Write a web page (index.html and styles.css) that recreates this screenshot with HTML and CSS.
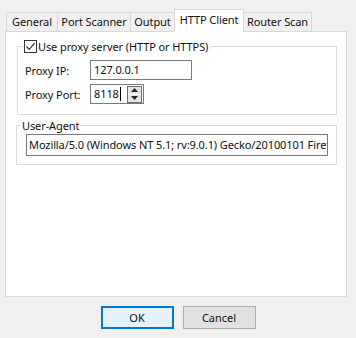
FILE: index.html
```html
<!DOCTYPE html>
<html lang="en">
<head>
    <meta charset="UTF-8">
    <title>Settings</title>
    <link rel="stylesheet" href="styles.css">
</head>
<body>
    <div class="dialog">
        <!-- Tab strip -->
        <div class="tabs">
            <div class="tab tab-general">General</div>
            <div class="tab tab-scanner">Port Scanner</div>
            <div class="tab tab-output">Output</div>
            <div class="tab tab-http active">HTTP Client</div>
            <div class="tab tab-router">Router Scan</div>
        </div>

        <div class="panel">
            <!-- Proxy settings -->
            <fieldset class="group proxy-group">
                <legend class="check-legend">
                    <span class="checkbox">
                        <svg width="11" height="11" viewBox="0 0 11 11"><polyline points="1.5,5.5 4.2,8.3 9.6,2.2" fill="none" stroke="#333" stroke-width="1.2"/></svg>
                    </span>
                    <span>Use proxy server (HTTP or HTTPS)</span>
                </legend>
                <div class="row">
                    <span class="label">Proxy IP:</span>
                    <div class="field ip-field">127.0.0.1</div>
                </div>
                <div class="row">
                    <span class="label">Proxy Port:</span>
                    <div class="field port-field">
                        <span>8118</span><span class="caret"></span>
                        <span class="spin">
                            <span class="spin-btn"><svg width="7" height="4" viewBox="0 0 7 4"><polygon points="0,4 3.5,0 7,4" fill="#222"/></svg></span>
                            <span class="spin-btn"><svg width="7" height="4" viewBox="0 0 7 4"><polygon points="0,0 7,0 3.5,4" fill="#222"/></svg></span>
                        </span>
                    </div>
                </div>
            </fieldset>

            <!-- User agent -->
            <fieldset class="group ua-group">
                <legend class="text-legend">User-Agent</legend>
                <div class="field ua-field">Mozilla/5.0 (Windows NT 5.1; rv:9.0.1) Gecko/20100101 Firefox/9.0.1</div>
            </fieldset>
        </div>

        <div class="buttons">
            <button class="btn btn-default">OK</button>
            <button class="btn">Cancel</button>
        </div>
    </div>
</body>
</html>
```

FILE: styles.css
```css
/* Base */
* {
    box-sizing: border-box;
}

body {
    margin: 0;
    background: #f0f0f0;
    font-family: 'Noto Sans', 'Segoe UI', sans-serif;
    font-size: 11px;
    letter-spacing: -0.1px;
    color: #111;
}

.dialog {
    width: 356px;
    height: 338px;
    padding: 9px 9px 0 5px;
}

/* Tabs */
.tabs {
    display: flex;
    align-items: flex-end;
    height: 22px;
    padding-left: 1px;
}

.tab {
    height: 19px;
    margin-right: -1px;
    border: 1px solid #d9d9d9;
    border-bottom: none;
    background: #f0f0f0;
    line-height: 17px;
    text-align: center;
    white-space: nowrap;
}

.tab-general { width: 52px; }
.tab-scanner { width: 74px; }
.tab-output  { width: 45px; }
.tab-http    { width: 70px; }
.tab-router  { width: 69px; }

.tab.active {
    position: relative;
    z-index: 1;
    height: 23px;
    margin-bottom: -1px;
    background: #fff;
    line-height: 20px;
}

/* Panel */
.panel {
    height: 266px;
    border: 1px solid #d9d9d9;
    background: #fff;
    padding: 7px 9px 0 11px;
}

/* Group boxes */
.group {
    margin: 0;
    padding: 0;
    border: 1px solid #dcdcdc;
    min-width: 0;
}

.proxy-group {
    height: 76px;
    padding: 6px 0 0 7px;
}

.ua-group {
    margin-top: 3px;
    margin-left: -1px;
    height: 47px;
    padding: 1px 8px 0 9px;
}

.check-legend {
    display: flex;
    align-items: center;
    padding: 0 3px 0 0;
    margin-left: -1px;
    line-height: 15px;
}

.checkbox {
    width: 13px;
    height: 13px;
    border: 1px solid #333;
    background: #fff;
    margin-right: 1px;
    display: flex;
    align-items: center;
    justify-content: center;
}

.text-legend {
    padding: 0 1px;
    margin-left: -5px;
    line-height: 15px;
}

/* Rows */
.row {
    display: flex;
    align-items: center;
    height: 20px;
    margin-bottom: 4px;
}

.label {
    width: 65px;
    white-space: nowrap;
}

.field {
    height: 20px;
    border: 1px solid #7a7a7a;
    background: #fff;
    padding: 0 3px;
    line-height: 18px;
    white-space: nowrap;
    overflow: hidden;
}

.ip-field {
    width: 102px;
}

.port-field {
    width: 54px;
    display: flex;
    align-items: center;
    padding-right: 1px;
}

.caret {
    width: 1px;
    height: 14px;
    background: #000;
    margin-left: 1px;
}

.spin {
    margin-left: auto;
    display: flex;
    flex-direction: column;
    gap: 1px;
    border: 1px solid #6d6d6d;
}

.spin-btn {
    width: 13px;
    height: 7px;
    background: #e5e5e5;
    display: flex;
    align-items: center;
    justify-content: center;
}

.ua-field {
    height: 22px;
    line-height: 20px;
    padding-left: 2px;
    text-overflow: clip;
}

/* Buttons */
.buttons {
    display: flex;
    justify-content: center;
    gap: 9px;
    padding: 9px 0 0 4px;
}

.btn {
    width: 73px;
    height: 23px;
    font: inherit;
    color: #111;
    background: #e1e1e1;
    border: 1px solid #adadad;
    padding: 0;
}

.btn-default {
    background: #e5f1fb;
    border: 2px solid #0078d7;
}
```
